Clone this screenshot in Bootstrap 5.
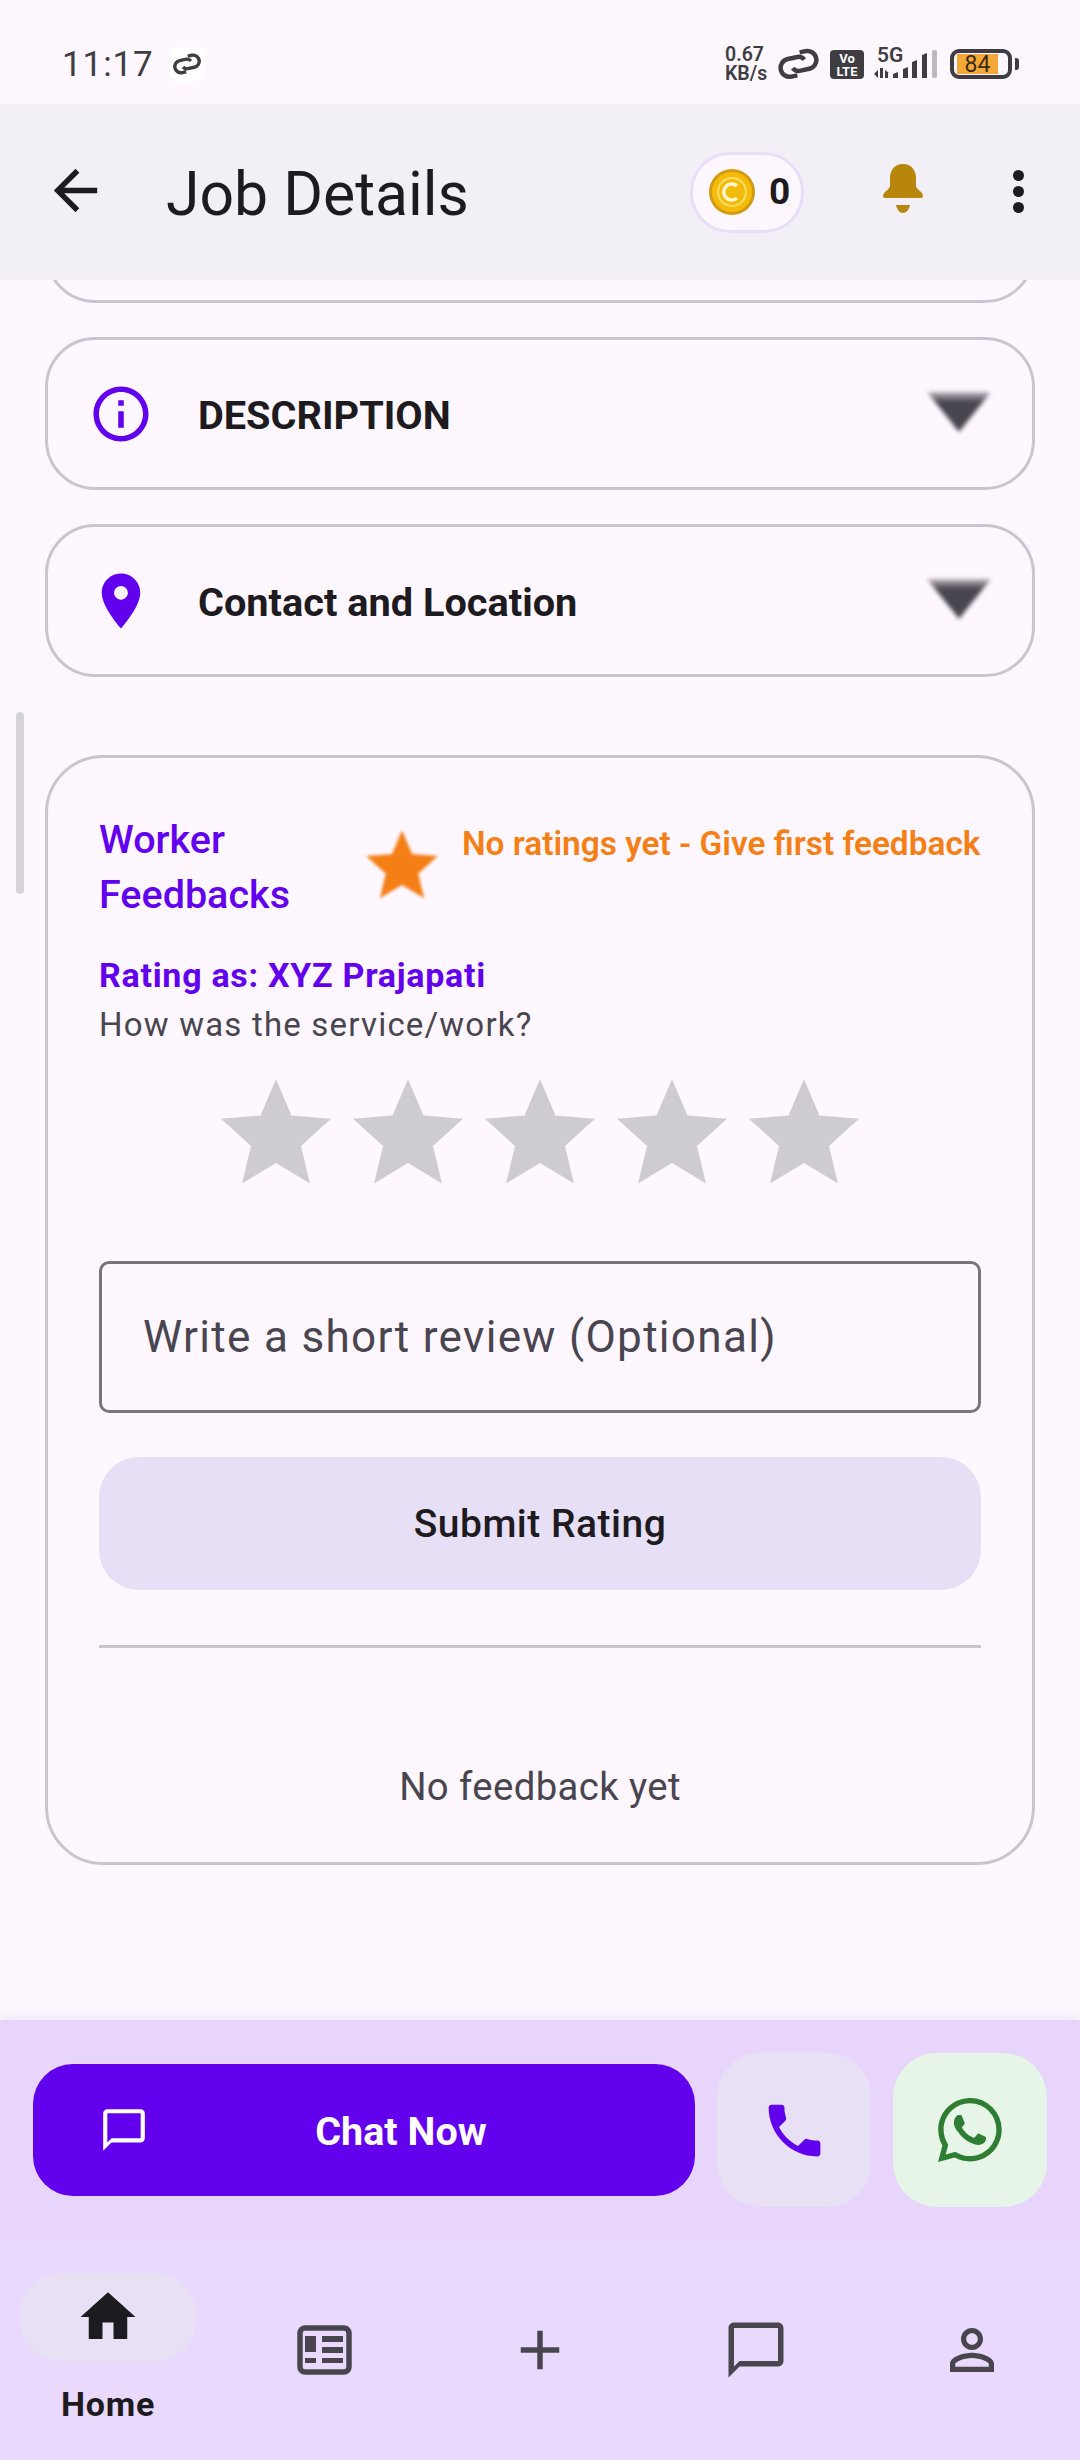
<!doctype html>
<html lang="en">
<head>
<meta charset="utf-8">
<title>Job Details</title>
<link href="https://cdn.jsdelivr.net/npm/bootstrap@5.3.0/dist/css/bootstrap.min.css" rel="stylesheet">
<style>
html,body{margin:0;height:2460px;overflow:hidden}
body{background:#fef7ff;color:#1d1b20;font-family:Roboto,"Liberation Sans",sans-serif;width:1080px;position:relative}
.screen{height:2460px}
.sbar{height:104px;padding:24px 61px 0 62px;color:#3f3d42}
.clock{font-size:35px;letter-spacing:.9px;line-height:1}
.swirlbox{width:35px;height:35px;background:#fff;border-radius:8px;margin-left:16px}
.speed{font-size:19.500px;font-weight:600;line-height:19px;width:43px;margin-right:10px;white-space:nowrap}
.speed span{display:block;height:19px}
.linkic{margin-right:11px}
.volte{margin-right:10px}
.sigbox{width:63px;height:32px;margin-right:13px;margin-top:-3px}
.fiveg{font-size:21px;font-weight:600;line-height:1;left:3px;top:-2px}
.sigsvg{left:0;top:0}
.batt-wrap{position:relative;width:69px;height:30px}
.batt{position:relative;width:62px;height:30px;border:4px solid #3f3d42;border-radius:9px}
.batt-pct{position:absolute;left:3px;top:1px;width:41px;height:20px;background:#f4a83a;color:#3b2a10;font-size:23px;line-height:21px;text-align:center}
.batt-nub{position:absolute;right:0;top:9px;width:4px;height:12px;background:#3f3d42;border-radius:0 3px 3px 0}
.appbar{height:176px;background:#f3eff7;position:relative;z-index:2;padding:0 0 0 43px}
.backic{margin-top:-4px}
.appbar h1{font-size:60.700px;font-weight:400;margin:6px 0 0 58px;line-height:1;flex:1}
.coinchip{width:114px;height:81px;border:3px solid #e8def8;border-radius:40px;background:#fef7ff;margin-right:79px;padding-left:16px;font-size:37px;font-weight:700;gap:14px}
.bellbox{width:40px;height:49px;margin-right:90px;margin-top:-7px}
.dots{width:12px;margin-right:55px;gap:5px;margin-top:-1px}
.dots i{display:block;width:11px;height:11px;border-radius:50%;background:#1d1b20}
.content{flex:1 1 0;overflow:hidden;padding:0 45px;position:relative;min-height:0}
.acc{height:153px;border:3px solid #cac4d0;border-radius:50px;padding:0 39px 0 40px;margin-bottom:34px;background:#fef7ff}
.acc-top{height:123px;margin-top:-100px}
.acc-title{font-size:39.700px;font-weight:700;margin-left:44px;flex:1;color:#1d1b20;padding-top:5px}
.tri{width:68px;height:48px;filter:blur(2px);margin-top:-4px;overflow:visible}
.fb{margin-top:78px;height:1110px;border:3px solid #cac4d0;border-radius:58px;padding:54px 51px 0}
.fb-head{height:110px;color:#6200ee;font-size:39.500px;font-weight:500;line-height:55px}
.fb-name{width:260px}
.fb-star{width:86px;height:86px;margin-top:11px;filter:blur(1.600px);flex:none}
.fb-none{color:#f57f17;font-size:33.400px;font-weight:600;line-height:46px;margin-left:17px;margin-top:9px;white-space:nowrap}
.rating-as{color:#6200ee;font-size:34px;font-weight:700;line-height:50px;margin-top:28px;letter-spacing:.72px}
.how{color:#49454f;font-size:33px;line-height:50px;letter-spacing:1.200px}
.stars{margin-top:18px}
.stars svg{width:132px;height:132px;display:block;fill:#cfcbd2}
.field{height:152px;margin-top:61px;border:3px solid #79747e;border-radius:10px;color:#49454f;font-size:44.100px;letter-spacing:1.300px;padding:0 41px}
.submit{height:133px;margin-top:44px;background:#e6dff6;border-radius:40px;border:0;color:#1d1b20;font-size:39px;font-weight:500;letter-spacing:.5px;width:100%;padding-top:7px}
.rule{height:3px;background:#cac4d0;margin-top:55px}
.nofb{color:#49454f;font-size:38.300px;text-align:center;margin-top:117px;line-height:44px;letter-spacing:.4px}
.actionbar{height:220px;background:#e7d5fb;padding:33px 33px 0;position:relative;box-shadow:0 -6px 8px rgba(120,100,160,.07)}
.chatbtn{width:662px;height:132px;background:#6200ee;border-radius:40px;border:0;color:#fff;font-size:39.500px;font-weight:700;padding:3px 0 0 74px;position:relative;margin-top:11px;margin-right:22px}
.chatbtn svg{position:absolute;left:66px;top:41px;width:50px;height:50px}
.roundbtn{width:154px;height:154px;border:0;border-radius:44px;background:#e8e0f5;padding:0;margin-right:22px}
.wa{background:#e7f4e8;margin-right:0}
.navi{height:220px;background:#e9d9fc;position:relative}
.navcell{width:216px;height:220px}
.homepill{position:absolute;left:20px;top:33px;width:176px;height:88px;background:#e8e0f5;border-radius:40px}
.homesvg{position:absolute;left:75px;top:44px;width:66px;height:66px}
.homelabel{position:absolute;left:0;width:216px;text-align:center;top:144px;font-size:34px;font-weight:700;letter-spacing:.8px;line-height:40px}
.navi svg.ni{width:66px;height:66px;fill:#49454f}
.navi svg.feed{width:55px;height:50px}
.thumb{position:absolute;left:16px;top:712px;width:8px;height:182px;background:#d6d2da;border-radius:4px;z-index:3}
</style>
</head>
<body>
<div class="screen d-flex flex-column">
  <div class="sbar d-flex align-items-center">
    <span class="clock">11:17</span>
    <div class="swirlbox d-flex align-items-center justify-content-center">
      <svg width="28" height="22" viewBox="0 0 41 32" fill="none" stroke="#3f3d42" stroke-width="5"><g transform="rotate(-12 20 16)"><path d="M17 27h-6a9 9 0 0 1 0-18h10a7 7 0 0 1 6 4"/><path d="M24 5h6a9 9 0 0 1 0 18H20a7 7 0 0 1-6-4"/></g></svg>
    </div>
    <div class="flex-grow-1"></div>
    <div class="speed"><span>0.67</span><span>KB/s</span></div>
    <svg class="linkic" width="41" height="32" viewBox="0 0 41 32" fill="none" stroke="#3f3d42" stroke-width="4.500"><g transform="rotate(-12 20 16)"><path d="M17 27h-6a9 9 0 0 1 0-18h10a7 7 0 0 1 6 4"/><path d="M24 5h6a9 9 0 0 1 0 18H20a7 7 0 0 1-6-4"/></g></svg>
    <svg class="volte" width="34" height="29" viewBox="0 0 34 29"><rect width="34" height="29" rx="4" fill="#3f3d42"/><text x="17" y="13" font-size="13" font-weight="700" fill="#fff" text-anchor="middle" font-family="Roboto">Vo</text><text x="17" y="26" font-size="13" font-weight="700" fill="#fff" text-anchor="middle" font-family="Roboto">LTE</text></svg>
    <div class="sigbox position-relative">
      <span class="fiveg position-absolute">5G</span>
      <svg class="sigsvg position-absolute" width="63" height="32" viewBox="0 0 63 32" fill="#3f3d42"><path d="M0 27l4-4v8zM6 21h3v10H6zM11 23l4 3h-1v5h-3z"/><path d="M19 31v-4l5-2v6zM29 31v-9l5-2v11zM38 31V15l5-2v18zM48 31V8l5-2v25z"/><rect x="58" y="3" width="5" height="28" rx="2" fill="#bdb9c0"/></svg>
    </div>
    <div class="batt-wrap"><div class="batt"><span class="batt-pct">84</span></div><span class="batt-nub"></span></div>
  </div>
  <div class="appbar d-flex align-items-center">
    <svg class="backic" width="65" height="65" viewBox="0 0 24 24" fill="#1d1b20"><path d="M20 11H7.830l5.590-5.590L12 4l-8 8 8 8 1.410-1.410L7.830 13H20v-2z"/></svg>
    <h1>Job Details</h1>
    <div class="coinchip d-flex align-items-center">
      <svg width="46" height="46" viewBox="0 0 46 46"><circle cx="23" cy="23" r="23" fill="#d19a10"/><circle cx="23" cy="23" r="20" fill="#f4bb08"/><circle cx="23" cy="23" r="14" fill="none" stroke="#f9dd6c" stroke-width="2"/><path d="M28 17a8 8 0 1 0 0 12" fill="none" stroke="#fff6cc" stroke-width="3.500"/></svg>
      <span>0</span>
    </div>
    <svg class="bellbox" viewBox="0 0 40 49" fill="#b8860b"><path d="M20 0c8 0 13 6 13 14v8c0 3 7 6 7 10 0 1-1 2-2 2H2c-1 0-2-1-2-2 0-4 7-7 7-10v-8C7 6 12 0 20 0z"/><path d="M13 41h14c-1 5-4 8-7 8s-6-3-7-8z"/></svg>
    <div class="dots d-flex flex-column"><i></i><i></i><i></i></div>
  </div>
  <div class="thumb"></div>
  <div class="content">
    <div class="acc acc-top"></div>
    <div class="acc d-flex align-items-center">
      <svg width="66" height="66" viewBox="0 0 24 24" fill="#6200ee"><path d="M11 7h2v2h-2zm0 4h2v6h-2zm1-9C6.480 2 2 6.480 2 12s4.480 10 10 10 10-4.480 10-10S17.520 2 12 2zm0 18c-4.410 0-8-3.590-8-8s3.590-8 8-8 8 3.590 8 8-3.590 8-8 8z"/></svg>
      <span class="acc-title">DESCRIPTION</span>
      <svg class="tri" viewBox="0 0 66 48"><defs><linearGradient id="fade" x1="0" y1="0" x2="0" y2="1"><stop offset="0" stop-color="#49454f" stop-opacity=".35"/><stop offset=".25" stop-color="#49454f"/></linearGradient></defs><path fill="url(#fade)" d="M1 4h64L33 44z"/></svg>
    </div>
    <div class="acc d-flex align-items-center">
      <svg width="66" height="66" viewBox="0 0 24 24" fill="#6200ee"><path d="M12 2C8.130 2 5 5.130 5 9c0 5.250 7 13 7 13s7-7.750 7-13c0-3.870-3.130-7-7-7zm0 9.500c-1.380 0-2.500-1.120-2.500-2.500s1.120-2.500 2.500-2.500 2.500 1.120 2.500 2.500-1.120 2.500-2.500 2.500z"/></svg>
      <span class="acc-title">Contact and Location</span>
      <svg class="tri" viewBox="0 0 66 48"><path fill="url(#fade)" d="M1 4h64L33 44z"/></svg>
    </div>
    <div class="fb">
      <div class="fb-head d-flex">
        <div class="fb-name">Worker Feedbacks</div>
        <svg class="fb-star" viewBox="0 0 24 24" fill="#f57f17"><path d="M12 17.270L18.180 21l-1.640-6.810L22 9.240l-7.190-.610L12 2 9.190 8.630 2 9.240l5.460 4.950L5.820 21z"/></svg>
        <div class="fb-none">No ratings yet - Give first feedback</div>
      </div>
      <div class="rating-as">Rating as: XYZ Prajapati</div>
      <div class="how">How was the service/work?</div>
      <div class="stars d-flex justify-content-center">
        <svg viewBox="0 0 24 24"><path d="M12 17.270L18.180 21l-1.640-6.810L22 9.240l-7.190-.610L12 2 9.190 8.630 2 9.240l5.460 4.950L5.820 21z"/></svg>
        <svg viewBox="0 0 24 24"><path d="M12 17.270L18.180 21l-1.640-6.810L22 9.240l-7.190-.610L12 2 9.190 8.630 2 9.240l5.460 4.950L5.820 21z"/></svg>
        <svg viewBox="0 0 24 24"><path d="M12 17.270L18.180 21l-1.640-6.810L22 9.240l-7.190-.610L12 2 9.190 8.630 2 9.240l5.460 4.950L5.820 21z"/></svg>
        <svg viewBox="0 0 24 24"><path d="M12 17.270L18.180 21l-1.640-6.810L22 9.240l-7.190-.610L12 2 9.190 8.630 2 9.240l5.460 4.950L5.820 21z"/></svg>
        <svg viewBox="0 0 24 24"><path d="M12 17.270L18.180 21l-1.640-6.810L22 9.240l-7.190-.610L12 2 9.190 8.630 2 9.240l5.460 4.950L5.820 21z"/></svg>
      </div>
      <div class="field d-flex align-items-center">Write a short review (Optional)</div>
      <button class="btn submit">Submit Rating</button>
      <div class="rule"></div>
      <div class="nofb">No feedback yet</div>
    </div>
  </div>
  <div class="actionbar d-flex align-items-start">
    <button class="btn chatbtn"><svg viewBox="0 0 24 24" fill="#fff"><path d="M20 2H4c-1.100 0-2 .9-2 2v18l4-4h14c1.100 0 2-.9 2-2V4c0-1.100-.9-2-2-2zm0 14H6l-2 2V4h16v12z"/></svg>Chat Now</button>
    <button class="btn roundbtn d-flex align-items-center justify-content-center"><svg width="69" height="69" viewBox="0 0 24 24" fill="#6200ee"><path d="M6.620 10.790c1.440 2.830 3.760 5.140 6.590 6.590l2.200-2.200c.27-.27.67-.36 1.020-.24 1.120.37 2.330.57 3.570.57.55 0 1 .45 1 1V20c0 .55-.45 1-1 1-9.390 0-17-7.610-17-17 0-.55.45-1 1-1h3.500c.55 0 1 .45 1 1 0 1.250.2 2.450.57 3.570.11.35.03.74-.25 1.020l-2.200 2.200z"/></svg></button>
    <button class="btn roundbtn wa d-flex align-items-center justify-content-center"><svg width="64" height="64" viewBox="0 0 16 16" fill="#2e7d32"><path d="M13.601 2.326A7.854 7.854 0 0 0 7.994 0C3.627 0 .068 3.558.064 7.926c0 1.399.366 2.760 1.057 3.965L0 16l4.204-1.102a7.933 7.933 0 0 0 3.790.965h.004c4.368 0 7.926-3.558 7.930-7.930A7.898 7.898 0 0 0 13.600 2.326zM7.994 14.521a6.573 6.573 0 0 1-3.356-.92l-.24-.144-2.494.654.666-2.433-.156-.251a6.560 6.560 0 0 1-1.007-3.505c0-3.626 2.957-6.584 6.591-6.584a6.560 6.560 0 0 1 4.660 1.931 6.557 6.557 0 0 1 1.928 4.660c-.004 3.639-2.961 6.592-6.592 6.592zm3.615-4.934c-.197-.099-1.170-.578-1.353-.646-.182-.065-.315-.099-.445.099-.133.197-.513.646-.627.775-.114.133-.232.148-.43.050-.197-.1-.836-.308-1.592-.985-.59-.525-.985-1.175-1.103-1.372-.114-.198-.011-.304.088-.403.087-.088.197-.232.296-.346.1-.114.133-.198.198-.33.065-.134.034-.248-.015-.347-.05-.099-.445-1.076-.612-1.470-.16-.389-.323-.335-.445-.34-.114-.007-.247-.007-.38-.007a.729.729 0 0 0-.529.247c-.182.198-.691.677-.691 1.654 0 .977.71 1.916.81 2.049.098.133 1.394 2.132 3.383 2.992.47.205.84.326 1.129.418.475.152.904.129 1.246.080.38-.058 1.171-.48 1.338-.943.164-.464.164-.86.114-.943-.049-.084-.182-.133-.38-.232z"/></svg></button>
  </div>
  <div class="navi d-flex">
    <div class="navcell position-relative">
      <div class="homepill"></div>
      <svg class="homesvg" viewBox="0 0 24 24" fill="#1d1b20"><path d="M10 20v-6h4v6h5v-8h3L12 3 2 12h3v8z"/></svg>
      <div class="homelabel">Home</div>
    </div>
    <div class="navcell d-flex align-items-center justify-content-center"><svg class="feed" viewBox="0 0 55 50" fill="#49454f"><rect x="3" y="3" width="49" height="44" rx="5" fill="none" stroke="#49454f" stroke-width="5.500"/><rect x="8" y="11" width="11" height="16"/><rect x="8" y="33" width="11" height="5"/><rect x="25" y="11" width="21" height="6"/><rect x="25" y="22" width="21" height="6"/><rect x="25" y="33" width="21" height="5"/></svg></div>
    <div class="navcell d-flex align-items-center justify-content-center"><svg class="ni" viewBox="0 0 24 24"><path d="M19 13h-6v6h-2v-6H5v-2h6V5h2v6h6v2z"/></svg></div>
    <div class="navcell d-flex align-items-center justify-content-center"><svg class="ni" viewBox="0 0 24 24"><path d="M20 2H4c-1.100 0-2 .9-2 2v18l4-4h14c1.100 0 2-.9 2-2V4c0-1.100-.9-2-2-2zm0 14H6l-2 2V4h16v12z"/></svg></div>
    <div class="navcell d-flex align-items-center justify-content-center"><svg class="ni" viewBox="0 0 24 24"><path d="M12 5.900c1.160 0 2.100.94 2.100 2.100s-.94 2.100-2.100 2.100S9.900 9.160 9.900 8s.94-2.100 2.100-2.100m0 9c2.970 0 6.100 1.460 6.100 2.100v1.100H5.900V17c0-.64 3.130-2.100 6.100-2.100M12 4C9.790 4 8 5.790 8 8s1.790 4 4 4 4-1.790 4-4-1.790-4-4-4zm0 9c-2.670 0-8 1.340-8 4v3h16v-3c0-2.660-5.330-4-8-4z"/></svg></div>
  </div>
</div>
<script src="https://cdn.jsdelivr.net/npm/bootstrap@5.3.0/dist/js/bootstrap.bundle.min.js"></script>
</body>
</html>
